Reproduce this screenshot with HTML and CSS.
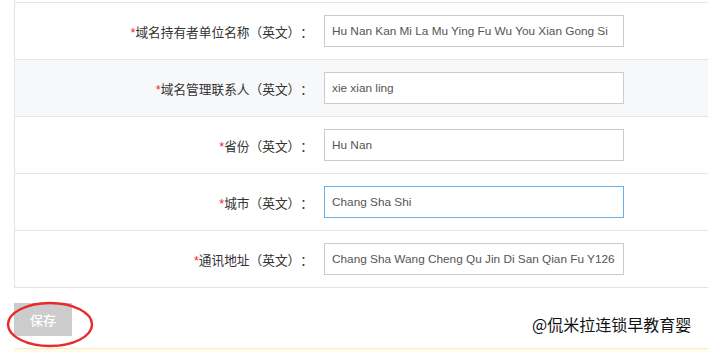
FILE: index.html
```html
<!DOCTYPE html>
<html lang="zh-CN">
<head>
<meta charset="utf-8">
<title>域名信息</title>
<link rel="stylesheet" href="styles.css">
</head>
<body>
<div class="page">
  <div class="form">
    <div class="row">
      <label class="label"><span class="req">*</span>域名持有者单位名称（英文）：</label>
      <div class="field"><input class="input" type="text" value="Hu Nan Kan Mi La Mu Ying Fu Wu You Xian Gong Si"></div>
    </div>
    <div class="row alt">
      <label class="label"><span class="req">*</span>域名管理联系人（英文）：</label>
      <div class="field"><input class="input" type="text" value="xie xian ling"></div>
    </div>
    <div class="row">
      <label class="label"><span class="req">*</span>省份（英文）：</label>
      <div class="field"><input class="input" type="text" value="Hu Nan"></div>
    </div>
    <div class="row">
      <label class="label"><span class="req">*</span>城市（英文）：</label>
      <div class="field"><input class="input focus" type="text" value="Chang Sha Shi"></div>
    </div>
    <div class="row">
      <label class="label"><span class="req">*</span>通讯地址（英文）：</label>
      <div class="field"><input class="input" type="text" value="Chang Sha Wang Cheng Qu Jin Di San Qian Fu Y126"></div>
    </div>
  </div>
  <div class="actions">
    <button class="btn" type="button">保存</button>
    <svg class="circle" width="90" height="50" viewBox="0 0 90 50"><ellipse cx="45" cy="23.5" rx="42" ry="21.5" fill="none" stroke="#e82a2a" stroke-width="2.4"/></svg>
    <div class="watermark">@侃米拉连锁早教育婴</div>
  </div>
  <div class="notice"></div>
</div>
</body>
</html>
```
FILE: styles.css
```css
html, body {
  margin: 0;
  padding: 0;
  background: #fff;
  overflow: hidden;
}
body {
  font-family: "Liberation Sans", "Noto Sans CJK SC", sans-serif;
  font-size: 13px;
  color: #333;
  text-spacing-trim: space-all;
}
.page {
  width: 708px;
  height: 352px;
  overflow: hidden;
  position: relative;
}
.form {
  margin-left: 14px;
  padding-top: 2px;
  border-left: 1px solid #dfe4ea;
  border-bottom: 1px solid #dfe4ea;
}
.row {
  display: flex;
  align-items: center;
  height: 56px;
  border-top: 1px solid #e2e6ea;
}
.row.alt {
  background: #f7f8fa;
}
.label {
  width: 298px;
  text-align: right;
  color: #333;
  white-space: nowrap;
  font-size: 12.7px;
  text-spacing-trim: space-all;
}
.req {
  color: #f0242c;
}
.field {
  padding-left: 11px;
}
.input {
  box-sizing: border-box;
  width: 300px;
  height: 32px;
  border: 1px solid #cccccc;
  padding: 0 7px;
  font-family: "Liberation Sans", "Noto Sans CJK SC", sans-serif;
  font-size: 11.8px;
  color: #555;
  background: #fff;
  outline: none;
}
.input.focus {
  border-color: #66afe9;
}
.actions {
  position: relative;
  height: 60px;
  padding-left: 14px;
  display: flex;
  align-items: center;
}
.btn {
  width: 58px;
  height: 33px;
  margin-top: 2px;
  border: none;
  background: #cccccc;
  color: #fff;
  font-family: "Noto Sans CJK SC", sans-serif;
  font-size: 13px;
  font-weight: 500;
  padding: 0;
}
.circle {
  position: absolute;
  left: 5px;
  top: 13px;
}
.watermark {
  position: absolute;
  left: 532px;
  top: 26px;
  font-family: "Noto Sans CJK SC", sans-serif;
  font-size: 16px;
  color: #111;
  line-height: 20px;
}
.notice {
  margin-left: 14px;
  height: 20px;
  background: #fffbea;
  border-top: 1px solid #faedc6;
}
```
